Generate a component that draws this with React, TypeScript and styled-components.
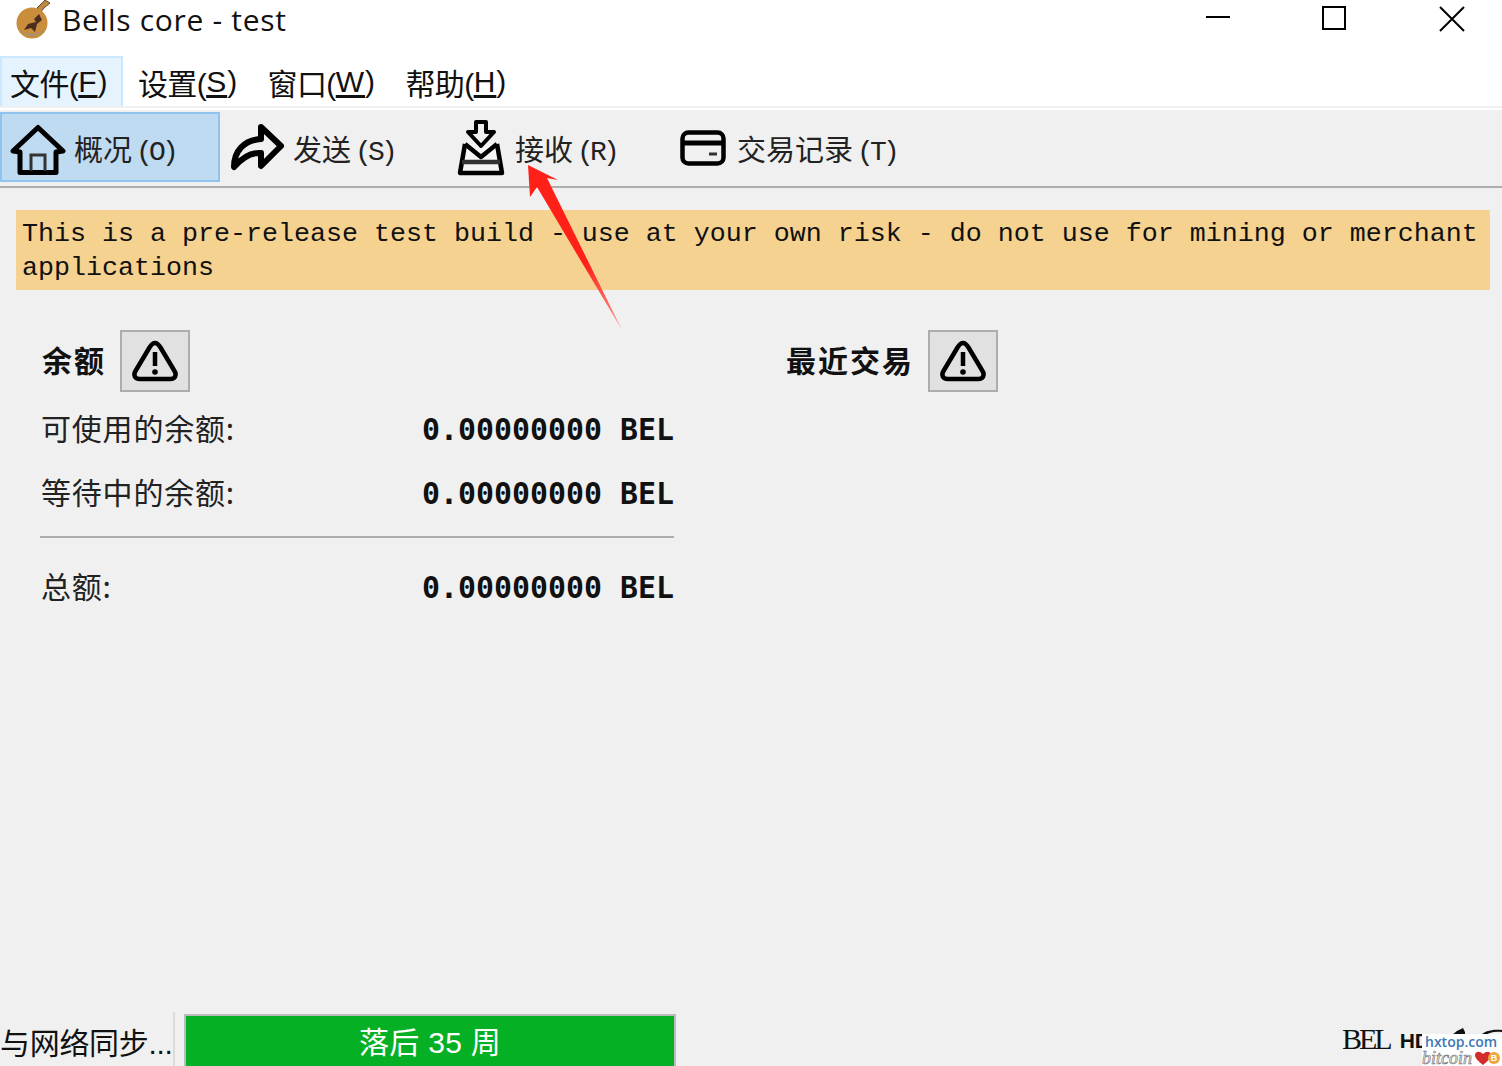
import React from "react";
import styled, { createGlobalStyle } from "styled-components";

const GlobalStyle = createGlobalStyle`
  html, body {
    margin: 0;
    padding: 0;
    background: #f0f0f0;
  }
  #root {
    height: 1066px;
    overflow: hidden;
  }
`;

const CJK = `"Noto Sans CJK SC", sans-serif`;
const MONO = `"Liberation Mono", "Noto Sans CJK SC", monospace`;

const menus = [
  { label: "文件", key: "F", active: true },
  { label: "设置", key: "S" },
  { label: "窗口", key: "W" },
  { label: "帮助", key: "H" },
];

const balances = [
  { label: "可使用的余额:", value: "0.00000000 BEL" },
  { label: "等待中的余额:", value: "0.00000000 BEL" },
];

const BellsLogo = () => (
  <svg width="36" height="40" viewBox="0 0 36 40">
    <path d="M22 8 L30 0 L35 3 L29 8 L25 13 Z" fill="#b98a45" stroke="#6a4a20" strokeWidth="1" />
    <circle cx="17" cy="23" r="15.5" fill="#c98d3c" />
    <path d="M5 30 A15.5 15.5 0 0 0 29 30 A20 20 0 0 1 5 30 Z" fill="#9c9286" />
    <path d="M24 14 L19 19 L21 22 L13 24 L9 30 L16 28 L20 32 L22 24 L27 20 Z" fill="#4a2f1e" />
  </svg>
);

const HomeIcon = () => (
  <svg width="56" height="54" viewBox="0 0 56 54" fill="none" stroke="#000" strokeWidth="5" strokeLinejoin="round" strokeLinecap="round">
    <path d="M3 30 L28 6.5 L53 30 L46 31 V51.5 H10 V31 Z" />
    <path d="M21 50 V34 H35 V50" strokeWidth="3" stroke="#333" strokeLinecap="butt" strokeLinejoin="miter" />
  </svg>
);

const SendIcon = () => (
  <svg width="56" height="50" viewBox="0 0 56 50" fill="none" stroke="#000" strokeWidth="6" strokeLinejoin="round">
    <path d="M4 44 C4 28 14 17 31 16 V4 L51 23 L31 43 V30 C20 29 11 36 4 44 Z" />
  </svg>
);

const ReceiveIcon = () => (
  <svg width="48" height="58" viewBox="0 0 48 58" fill="none" stroke="#000" strokeWidth="4" strokeLinejoin="round">
    <path d="M8 25 L3 54 H45 L40 25" strokeWidth="4.5" fill="#f6f6f6" />
    <path d="M8 25 L24 38 L40 25" strokeWidth="4.5" />
    <path d="M19 3 H29 V13 H37 L24 27 L11 13 H19 Z" strokeWidth="4" />
    <path d="M5 43 H43" strokeWidth="4.5" stroke="#333" />
  </svg>
);

const CardIcon = () => (
  <svg width="46" height="36" viewBox="0 0 46 36" fill="none" stroke="#000" strokeWidth="4.5">
    <rect x="2.5" y="2.5" width="41" height="31" rx="6" />
    <path d="M3 13 H43" strokeWidth="5" />
    <path d="M29 24 H37" strokeWidth="3" stroke="#333" />
  </svg>
);

const WarningIcon = () => (
  <svg width="48" height="44" viewBox="0 0 48 44" fill="none">
    <path d="M24 4 C21.5 4 20 6 18.5 8.5 L4.5 32 C2 36 4 40 8.5 40 H39.5 C44 40 46 36 43.5 32 L29.5 8.5 C28 6 26.5 4 24 4 Z" stroke="#000" strokeWidth="4.5" />
    <path d="M24 13 L24 27" stroke="#000" strokeWidth="4.5" />
    <circle cx="24" cy="33" r="2.8" fill="#000" />
  </svg>
);

const StatusIcons = () => (
  <svg width="56" height="10" viewBox="0 0 56 10" fill="#111">
    <path d="M2 8 C6 6 8 3 11 2 L15 0 L17 4 V8 Z" />
    <path d="M32 8 C36 3 44 1 54 2 V4 C46 3 40 5 36 8 Z" />
  </svg>
);

export default function App() {
  return (
    <>
      <GlobalStyle />
      <Window>
        <TitleBar>
          <TitleLeft>
            <BellsLogo />
            <TitleText>Bells core - test</TitleText>
          </TitleLeft>
          <WindowControls>
            <ControlMinimize />
            <ControlMaximize />
            <ControlClose>
              <svg width="26" height="26" viewBox="0 0 26 26" stroke="#000" strokeWidth="2">
                <path d="M1 1 L25 25 M25 1 L1 25" />
              </svg>
            </ControlClose>
          </WindowControls>
        </TitleBar>

        <MenuBar>
          {menus.map((m) => (
            <MenuItem key={m.key} $active={m.active}>
              {m.label}(<u>{m.key}</u>)
            </MenuItem>
          ))}
        </MenuBar>

        <Toolbar>
          <OverviewTab $active>
            <HomeIcon />
            <TabLabel>
              概况<TabKey>(O)</TabKey>
            </TabLabel>
          </OverviewTab>
          <SendTab>
            <SendIcon />
            <TabLabel>
              发送<TabKey>(S)</TabKey>
            </TabLabel>
          </SendTab>
          <ReceiveTab>
            <ReceiveIcon />
            <TabLabel>
              接收<TabKey>(R)</TabKey>
            </TabLabel>
          </ReceiveTab>
          <HistoryTab>
            <CardIcon />
            <TabLabel>
              交易记录<TabKey>(T)</TabKey>
            </TabLabel>
          </HistoryTab>
        </Toolbar>

        <Main>
          <Banner>
            This is a pre-release test build - use at your own risk - do not use for mining or merchant applications
          </Banner>
          <Columns>
            <BalancePanel>
              <SectionHead>
                <SectionTitle>余额</SectionTitle>
                <WarnButton>
                  <WarningIcon />
                </WarnButton>
              </SectionHead>
              {balances.map((b) => (
                <BalanceRow key={b.label}>
                  <BalanceLabel>{b.label}</BalanceLabel>
                  <BalanceValue>{b.value}</BalanceValue>
                </BalanceRow>
              ))}
              <Divider />
              <BalanceRow>
                <BalanceLabel>总额:</BalanceLabel>
                <BalanceValue>0.00000000 BEL</BalanceValue>
              </BalanceRow>
            </BalancePanel>
            <RecentPanel>
              <SectionHead>
                <SectionTitle>最近交易</SectionTitle>
                <WarnButton>
                  <WarningIcon />
                </WarnButton>
              </SectionHead>
            </RecentPanel>
          </Columns>
        </Main>

        <StatusBar>
          <SyncText>与网络同步...</SyncText>
          <ProgressTrack>
            <ProgressBar>落后 35 周</ProgressBar>
          </ProgressTrack>
          <StatusRight>
            <UnitText>BEL</UnitText>
            <HdText>HD</HdText>
            <StatusIconSlot>
              <StatusIcons />
            </StatusIconSlot>
          </StatusRight>
        </StatusBar>

        {/* annotation drawn over the screenshot */}
        <ArrowOverlay width="110" height="180" viewBox="0 0 110 180">
          <defs>
            <linearGradient id="arrowFade" x1="0" y1="0" x2="0" y2="1">
              <stop offset="0.6" stopColor="#ff2018" />
              <stop offset="1" stopColor="#ff9a90" />
            </linearGradient>
          </defs>
          <path d="M7 7 L37 22 L26 20 L101 172 L16 29 L9 39 Z" fill="url(#arrowFade)" />
        </ArrowOverlay>

        <Watermark>
          <WatermarkSite>hxtop.com</WatermarkSite>
          <WatermarkLine>
            <WatermarkBitcoin>bitcoin</WatermarkBitcoin>
            <svg width="16" height="14" viewBox="0 0 16 14">
              <path d="M8 14 C3 10 0 7 0 4 C0 1 4 -1 8 3 C12 -1 16 1 16 4 C16 7 13 10 8 14 Z" fill="#d42a2a" />
            </svg>
            <WatermarkCoin>B</WatermarkCoin>
          </WatermarkLine>
        </Watermark>
      </Window>
    </>
  );
}

const Window = styled.div`
  position: relative;
  width: 1502px;
  height: 1066px;
  display: flex;
  flex-direction: column;
  background: #f0f0f0;
  overflow: hidden;
`;

const TitleBar = styled.div`
  height: 56px;
  background: #fff;
  display: flex;
  justify-content: space-between;
  align-items: flex-start;
  flex: none;
`;

const TitleLeft = styled.div`
  display: flex;
  align-items: flex-start;
  gap: 11px;
  padding-left: 15px;
`;

const TitleText = styled.div`
  font-family: "Open Sans", "Noto Sans", sans-serif;
  font-size: 30px;
  letter-spacing: 0.7px;
  line-height: 40px;
  color: #111;
`;

const WindowControls = styled.div`
  display: flex;
  align-items: flex-start;
  padding: 6px 37px 0 0;
`;

const ControlMinimize = styled.div`
  width: 24px;
  height: 2px;
  margin-top: 10px;
  background: #000;
`;

const ControlMaximize = styled.div`
  width: 24px;
  height: 24px;
  box-sizing: border-box;
  border: 2px solid #000;
  margin-left: 92px;
`;

const ControlClose = styled.div`
  width: 26px;
  height: 26px;
  margin-left: 93px;
`;

const MenuBar = styled.div`
  height: 50px;
  flex: none;
  background: #fff;
  display: flex;
  align-items: stretch;
  border-bottom: 2px solid #f0f0f0;
`;

const MenuItem = styled.div<{ $active?: boolean }>`
  box-sizing: border-box;
  display: flex;
  align-items: center;
  height: 50px;
  padding: 0 14px 0 8px;
  margin-right: 5px;
  font-family: "Liberation Sans", ${CJK};
  font-size: 30px;
  letter-spacing: -0.6px;
  color: #111;
  white-space: pre;
  background: ${(p) => (p.$active ? "#e5f3ff" : "transparent")};
  border: 2px solid ${(p) => (p.$active ? "#cce8ff" : "transparent")};
  border-bottom: none;
  u {
    letter-spacing: 1px;
    text-underline-offset: 3px;
  }
`;

const Toolbar = styled.div`
  height: 74px;
  flex: none;
  display: flex;
  align-items: flex-start;
  border-top: 2px solid #fff;
  border-bottom: 2px solid #aeaeae;
  padding-top: 2px;
`;

const Tab = styled.div<{ $active?: boolean }>`
  box-sizing: border-box;
  height: 70px;
  display: flex;
  align-items: center;
  padding-top: 2px;
  background: ${(p) => (p.$active ? "#bfdbf2" : "transparent")};
  border: 2px solid ${(p) => (p.$active ? "#90c4ee" : "transparent")};
`;

const OverviewTab = styled(Tab)`
  width: 220px;
  padding-left: 8px;
  gap: 8px;
`;

const SendTab = styled(Tab)`
  width: 224px;
  padding-left: 8px;
  gap: 7px;
`;

const ReceiveTab = styled(Tab)`
  width: 224px;
  padding-left: 11px;
  gap: 10px;
`;

const HistoryTab = styled(Tab)`
  padding-left: 10px;
  gap: 11px;
`;

const TabLabel = styled.span`
  font-family: ${CJK};
  font-size: 29px;
  color: #222;
  white-space: nowrap;
`;

const TabKey = styled.span`
  font-family: "Liberation Mono", monospace;
  font-size: 28px;
  letter-spacing: -3.8px;
  margin-left: 4px;
  position: relative;
  top: -1px;
`;

const Main = styled.main`
  flex: 1;
  min-height: 0;
  padding: 22px 12px 0 16px;
`;

const Banner = styled.div`
  box-sizing: border-box;
  height: 80px;
  padding: 7px 6px 0 6px;
  background: #f5d290;
  font-family: ${MONO};
  font-size: 26.67px;
  line-height: 34px;
  color: #111;
`;

const Columns = styled.div`
  display: flex;
  padding: 40px 0 0 24px;
`;

const BalancePanel = styled.section`
  width: 634px;
`;

const RecentPanel = styled.section`
  margin-left: 110px;
`;

const SectionHead = styled.div`
  display: flex;
  align-items: center;
  gap: 14px;
  height: 62px;
  padding-left: 2px;
`;

const SectionTitle = styled.h2`
  margin: 0 0 4px;
  font-family: ${CJK};
  font-size: 30px;
  font-weight: 700;
  color: #111;
  letter-spacing: 2px;
`;

const WarnButton = styled.div`
  box-sizing: border-box;
  width: 70px;
  height: 62px;
  display: flex;
  align-items: center;
  justify-content: center;
  background: #e1e1e1;
  border: 2px solid #adadad;
`;

const BalanceRow = styled.div`
  display: flex;
  justify-content: space-between;
  align-items: center;
  height: 64px;
  &:nth-child(2) {
    margin-top: 5px;
  }
`;

const BalanceLabel = styled.span`
  font-family: ${CJK};
  font-size: 30px;
  color: #222;
  letter-spacing: 0.8px;
  margin-left: 1px;
  padding-bottom: 4px;
`;

const BalanceValue = styled.span`
  font-family: "DejaVu Sans Mono", monospace;
  font-weight: 700;
  font-size: 29.9px;
  color: #111;
`;

const Divider = styled.div`
  height: 2px;
  background: #aeaeae;
  margin: 11px 0 17px;
`;

const StatusBar = styled.footer`
  flex: none;
  height: 54px;
  display: flex;
  align-items: flex-end;
`;

const SyncText = styled.div`
  width: 175px;
  height: 54px;
  flex: none;
  box-sizing: border-box;
  font-family: "Liberation Sans", ${CJK};
  font-size: 30px;
  line-height: 64px;
  letter-spacing: -0.3px;
  color: #111;
  white-space: nowrap;
  border-right: 2px solid #dcdcdc;
`;

const ProgressTrack = styled.div`
  margin-left: 9px;
  width: 492px;
  height: 52px;
  box-sizing: border-box;
  border: 2px solid #bcbcbc;
  border-bottom: none;
`;

const ProgressBar = styled.div`
  height: 50px;
  background: #06b025;
  color: #fff;
  text-align: center;
  font-family: "Liberation Sans", ${CJK};
  font-size: 30px;
  letter-spacing: 0.3px;
  line-height: 54px;
`;

const StatusRight = styled.div`
  margin-left: auto;
  display: flex;
  align-items: center;
  height: 54px;
  padding-right: 72px;
  gap: 10px;
  position: relative;
`;

const UnitText = styled.span`
  font-family: "Liberation Serif", serif;
  font-size: 30px;
  letter-spacing: -3px;
  line-height: 60px;
  color: #111;
`;

const HdText = styled.span`
  font-family: "Liberation Sans", sans-serif;
  font-weight: 700;
  font-size: 21px;
  color: #111;
  margin-top: 3px;
`;

const StatusIconSlot = styled.span`
  position: absolute;
  right: 0;
  top: 12px;
  width: 54px;
  height: 10px;
`;

const ArrowOverlay = styled.svg`
  position: absolute;
  left: 521px;
  top: 158px;
  pointer-events: none;
`;

const Watermark = styled.div`
  position: absolute;
  right: 0;
  bottom: 0;
  width: 80px;
  height: 32px;
  background: #fff;
`;

const WatermarkSite = styled.div`
  font-family: "Open Sans", sans-serif;
  font-weight: 600;
  font-size: 14px;
  line-height: 16px;
  padding-left: 3px;
  color: #3c78b4;
`;

const WatermarkLine = styled.div`
  display: flex;
  align-items: center;
  height: 16px;
`;

const WatermarkBitcoin = styled.span`
  flex: none;
  margin-right: 3px;
  font-family: "Liberation Serif", serif;
  font-style: italic;
  font-size: 18px;
  line-height: 16px;
  color: #fff;
  -webkit-text-stroke: 0.7px #777;
`;

const WatermarkCoin = styled.span`
  width: 12px;
  height: 12px;
  flex: none;
  margin-left: -3px;
  border-radius: 50%;
  background: #f2a33a;
  color: #fff;
  font-family: "Liberation Sans", sans-serif;
  font-weight: 700;
  font-size: 9px;
  line-height: 12px;
  text-align: center;
`;
